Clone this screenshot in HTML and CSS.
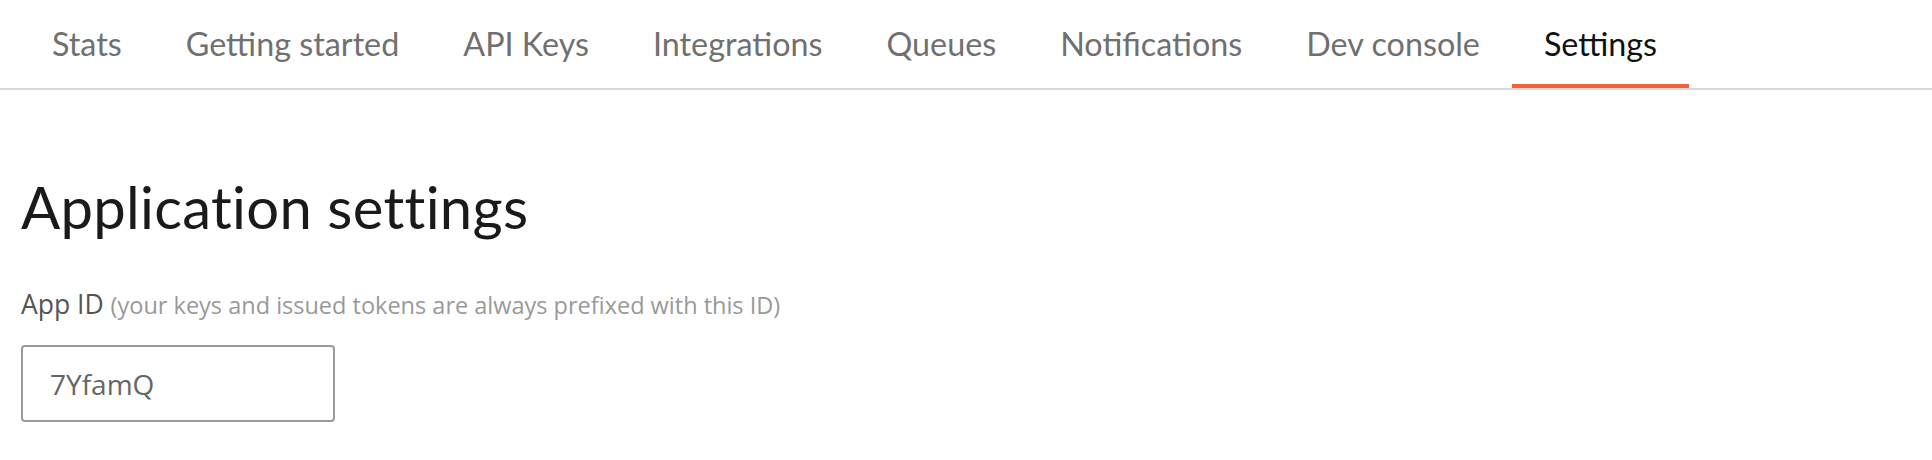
FILE: index.html
```html
<!DOCTYPE html>
<html>
<head>
<meta charset="utf-8">
<link rel="stylesheet" href="styles.css">
</head>
<body>
<nav class="tabs">
  <a class="tab">Stats</a>
  <a class="tab">Getting started</a>
  <a class="tab">API Keys</a>
  <a class="tab">Integrations</a>
  <a class="tab">Queues</a>
  <a class="tab">Notifications</a>
  <a class="tab">Dev console</a>
  <a class="tab active">Settings</a>
</nav>
<main class="content">
  <h1 class="title">Application settings</h1>
  <label class="label">App ID <span class="hint">(your keys and issued tokens are always prefixed with this ID)</span></label>
  <div class="field">7YfamQ</div>
</main>
</body>
</html>
```

FILE: styles.css
```css
html, body {
  margin: 0;
  padding: 0;
  background: #fff;
  font-family: Lato, "Noto Sans", sans-serif;
}
.tabs {
  display: flex;
  padding-left: 20px;
  border-bottom: 2px solid #d9d9d9;
}
.tab {
  display: block;
  padding: 25px 32px 21px;
  font-size: 32.3px;
  line-height: 38px;
  color: #707070;
  border-bottom: 4px solid transparent;
  white-space: nowrap;
}
.tab.active {
  color: #111;
  border-bottom-color: #ee6234;
}
.content {
  padding: 0 21px;
}
.title {
  margin: 83px 0 0;
  font-size: 58px;
  line-height: 68px;
  letter-spacing: 0.3px;
  font-weight: 400;
  color: #1a1a1a;
}
.label {
  display: block;
  margin-top: 48px;
  font-family: "Open Sans", Lato, sans-serif;
  font-size: 26.5px;
  line-height: 30px;
  color: #555;
}
.hint {
  font-size: 23.5px;
  color: #999;
}
.field {
  margin-top: 25px;
  width: 314px;
  height: 77px;
  box-sizing: border-box;
  border: 2px solid #9a9a9a;
  border-radius: 4px;
  padding-left: 27px;
  display: flex;
  align-items: center;
  font-family: "Open Sans", Lato, sans-serif;
  font-size: 28px;
  color: #666;
}
```
